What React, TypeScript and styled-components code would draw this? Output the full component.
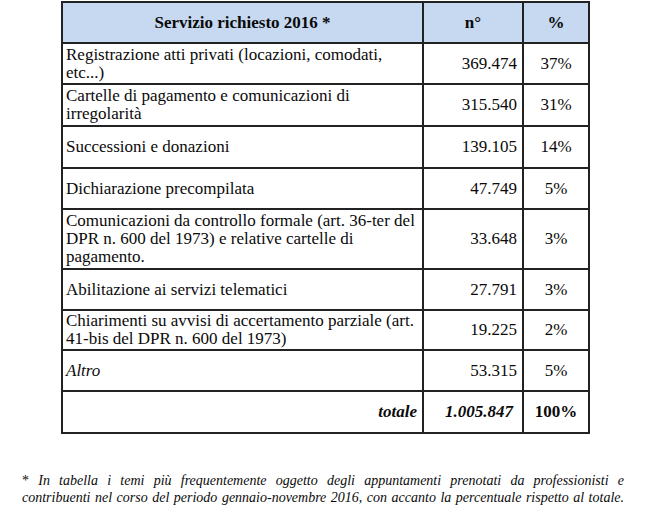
import React from 'react'
import styled, { createGlobalStyle } from 'styled-components'

const GlobalStyle = createGlobalStyle`
	html, body {
		margin: 0;
		padding: 0;
		background: #ffffff;
	}
	body {
		font-family: 'Liberation Serif', 'Times New Roman', serif;
		color: #0a0a0a;
	}
`

const Page = styled.div`
	width: 645px;
	height: 513px;
	display: flex;
	flex-direction: column;
	padding-top: 1px;
	box-sizing: border-box;
`

const Table = styled.table`
	margin-left: 61px;
	width: 527px;
	border-collapse: collapse;
	table-layout: fixed;
	font-family: 'Liberation Serif', 'Times New Roman', serif;
	font-size: 17px;
	line-height: 18px;
	color: #0a0a0a;
`

const Row = styled.tr<{ $h: number }>`
	height: ${({ $h }) => $h}px;
`

const HeadCell = styled.th`
	background: #c6d9f1;
	border: 2px solid #222;
	font-weight: bold;
	text-align: center;
	vertical-align: middle;
	padding: 0 4px;
`

const LabelCell = styled.td<{ $italic?: boolean }>`
	border: 2px solid #222;
	padding: 0 3px;
	vertical-align: middle;
	white-space: nowrap;
	font-style: ${({ $italic }) => ($italic ? 'italic' : 'normal')};
`

const NumCell = styled.td`
	border: 2px solid #222;
	padding: 0 5px;
	text-align: right;
	vertical-align: middle;
	white-space: nowrap;
`

const PctCell = styled.td`
	border: 2px solid #222;
	padding: 0;
	text-align: center;
	vertical-align: middle;
	white-space: nowrap;
`

const TotalLabel = styled(NumCell)`
	font-weight: bold;
	font-style: italic;
`

const TotalNum = styled(NumCell)`
	font-weight: bold;
	font-style: italic;
	padding-right: 9px;
`

const TotalPct = styled(PctCell)`
	font-weight: bold;
`

const Note = styled.div`
	margin: 38px 0 0 22px;
	width: 602px;
	font-family: 'Liberation Serif', 'Times New Roman', serif;
	font-size: 14px;
	line-height: 17px;
	font-style: italic;
	color: #0a0a0a;
`

const NoteLine = styled.div`
	text-align: justify;
	text-align-last: justify;
`

const Star = styled.span`
	font-style: normal;
`

type Item = { label: React.ReactNode; n: string; pct: string; h: number; italic?: boolean }

const items: Item[] = [
	{ label: <>Registrazione atti privati (locazioni, comodati,<br />etc...)</>, n: '369.474', pct: '37%', h: 41 },
	{ label: <>Cartelle di pagamento e comunicazioni di<br />irregolarità</>, n: '315.540', pct: '31%', h: 42 },
	{ label: 'Successioni e donazioni', n: '139.105', pct: '14%', h: 42 },
	{ label: 'Dichiarazione precompilata', n: '47.749', pct: '5%', h: 41 },
	{
		label: <>Comunicazioni da controllo formale (art. 36-ter del<br />DPR n. 600 del 1973) e relative cartelle di<br />pagamento.</>,
		n: '33.648',
		pct: '3%',
		h: 60,
	},
	{ label: 'Abilitazione ai servizi telematici', n: '27.791', pct: '3%', h: 41 },
	{ label: <>Chiarimenti su avvisi di accertamento parziale (art.<br />41-bis del DPR n. 600 del 1973)</>, n: '19.225', pct: '2%', h: 40 },
	{ label: 'Altro', n: '53.315', pct: '5%', h: 41, italic: true },
]

const App = () => {
	return (
		<Page>
			<GlobalStyle />
			<Table>
				<colgroup>
					<col style={{ width: 361 }} />
					<col style={{ width: 100 }} />
					<col style={{ width: 66 }} />
				</colgroup>
				<thead>
					<Row $h={41}>
						<HeadCell>Servizio richiesto 2016 *</HeadCell>
						<HeadCell>n°</HeadCell>
						<HeadCell>%</HeadCell>
					</Row>
				</thead>
				<tbody>
					{items.map((item, i) => (
						<Row $h={item.h} key={i}>
							<LabelCell $italic={item.italic}>{item.label}</LabelCell>
							<NumCell>{item.n}</NumCell>
							<PctCell>{item.pct}</PctCell>
						</Row>
					))}
					<Row $h={42}>
						<TotalLabel>totale</TotalLabel>
						<TotalNum>1.005.847</TotalNum>
						<TotalPct>100%</TotalPct>
					</Row>
				</tbody>
			</Table>
			<Note>
				<NoteLine>
					<Star>*</Star> In tabella i temi più frequentemente oggetto degli appuntamenti prenotati da professionisti e
				</NoteLine>
				<NoteLine>
					contribuenti nel corso del periodo gennaio-novembre 2016, con accanto la percentuale rispetto al totale.
				</NoteLine>
			</Note>
		</Page>
	)
}

export default App
